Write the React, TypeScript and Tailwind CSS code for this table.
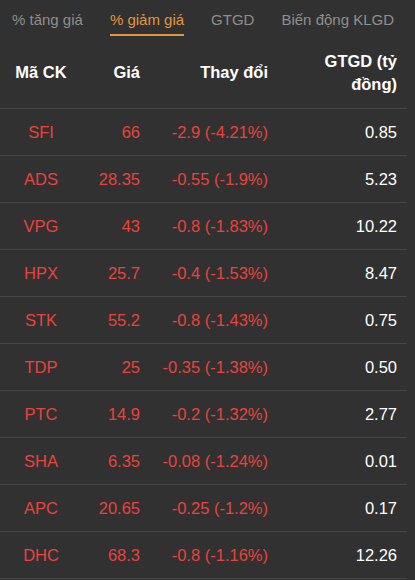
const tabs = ["% tăng giá", "% giảm giá", "GTGD", "Biến động KLGD"];

const rows = [
    { code: "SFI", price: "66", change: "-2.9 (-4.21%)", value: "0.85" },
    { code: "ADS", price: "28.35", change: "-0.55 (-1.9%)", value: "5.23" },
    { code: "VPG", price: "43", change: "-0.8 (-1.83%)", value: "10.22" },
    { code: "HPX", price: "25.7", change: "-0.4 (-1.53%)", value: "8.47" },
    { code: "STK", price: "55.2", change: "-0.8 (-1.43%)", value: "0.75" },
    { code: "TDP", price: "25", change: "-0.35 (-1.38%)", value: "0.50" },
    { code: "PTC", price: "14.9", change: "-0.2 (-1.32%)", value: "2.77" },
    { code: "SHA", price: "6.35", change: "-0.08 (-1.24%)", value: "0.01" },
    { code: "APC", price: "20.65", change: "-0.25 (-1.2%)", value: "0.17" },
    { code: "DHC", price: "68.3", change: "-0.8 (-1.16%)", value: "12.26" },
];

const App = () => {
    return (
        <div className="w-[415px] h-[580px] overflow-hidden bg-[#313131] font-['Liberation_Sans',Arial,sans-serif]">
            {/* Tabs */}
            <div className="flex gap-[27px] pl-3 pt-[9px] h-[37px] text-[15px]">
                {tabs.map((tab, i) => (
                    <div
                        key={tab}
                        className={
                            i === 1
                                ? "text-[#e3953f] border-b-2 border-[#e3953f] h-[27px] leading-[22px]"
                                : "text-[#8f8f8f] h-[27px] leading-[22px]"
                        }
                    >
                        {tab}
                    </div>
                ))}
            </div>

            <div className="w-[407px]">
                {/* Header */}
                <div className="grid grid-cols-[82px_58px_128px_129px] items-center h-[71px] text-white font-bold text-[16.5px] leading-[23px]">
                    <div className="text-center">Mã CK</div>
                    <div className="text-right">Giá</div>
                    <div className="text-right">Thay đổi</div>
                    <div className="text-right">
                        GTGD (tỷ
                        <br />
                        đồng)
                    </div>
                </div>

                {/* Rows */}
                {rows.map((row) => (
                    <div
                        key={row.code}
                        className="grid grid-cols-[82px_58px_128px_129px] items-center h-[47px] border-t border-[#454545] text-[16.5px]"
                    >
                        <div className="text-center text-[#e8433d]">{row.code}</div>
                        <div className="text-right text-[#e8433d]">{row.price}</div>
                        <div className="text-right text-[#e8433d]">{row.change}</div>
                        <div className="text-right text-white">{row.value}</div>
                    </div>
                ))}
                <div className="border-t border-[#454545]" />
            </div>
        </div>
    );
};

export default App;
